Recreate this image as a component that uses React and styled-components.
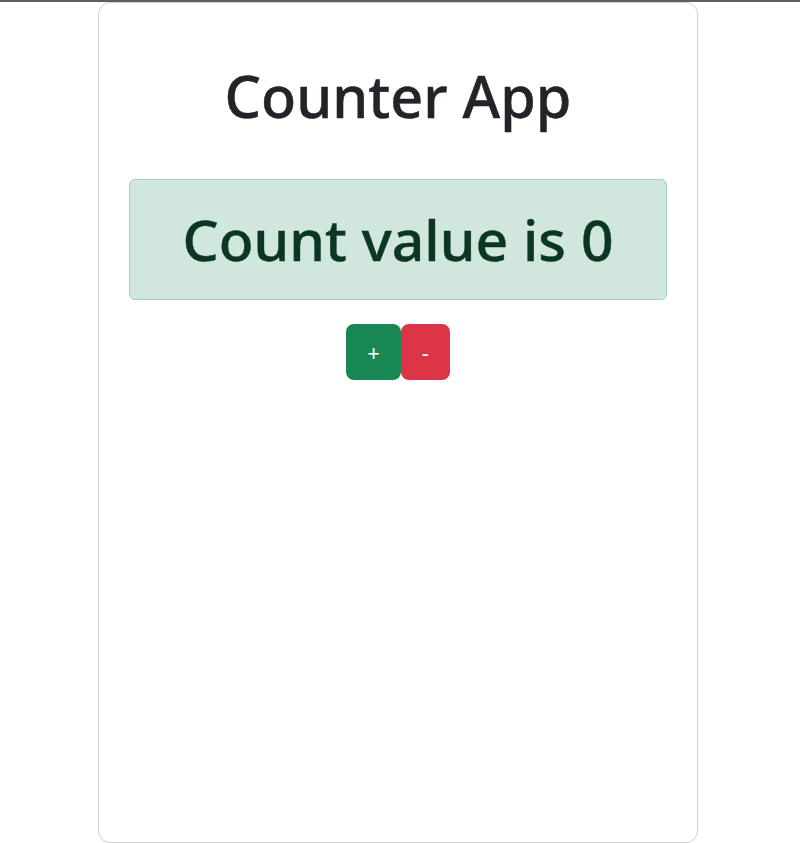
import styled, { createGlobalStyle } from 'styled-components'
import { useState } from 'react'

const GlobalStyle = createGlobalStyle`
  body {
    margin: 0;
    background: #fff;
    font-family: "Noto Sans", "Open Sans", sans-serif;
    color: #212529;
  }
`

export default function App() {
  const [count, setCount] = useState(0)
  return (
    <>
      <GlobalStyle />
      <TopLine />
      <Page>
        <Card>
          <Title>Counter App</Title>
          <Alert>
            <CountText>Count value is {count}</CountText>
          </Alert>
          <ButtonRow>
            <Button $variant="success" onClick={() => setCount(count + 1)}>+</Button>
            <Button $variant="danger" onClick={() => setCount(count - 1)}>-</Button>
          </ButtonRow>
        </Card>
      </Page>
    </>
  )
}

const TopLine = styled.div`
  height: 2px;
  background: #5e5e5e;
`

const Page = styled.div`
  display: flex;
  justify-content: center;
  padding-right: 4px;
`

const Card = styled.div`
  box-sizing: border-box;
  width: 600px;
  height: 841px;
  border: 1px solid #d0d0d0;
  border-radius: 12px;
  padding: 0 30px;
  display: flex;
  flex-direction: column;
  align-items: stretch;
`

const Title = styled.h1`
  margin: 59px 0 48px;
  text-align: center;
  font-size: 57.5px;
  font-weight: 500;
  line-height: 1.2;
  color: #212529;
  -webkit-text-stroke: 0.4px #212529;
`

const Alert = styled.div`
  box-sizing: border-box;
  height: 121px;
  background: #d1e7dd;
  border: 1px solid #a3cfbb;
  border-radius: 6px;
  display: flex;
  align-items: center;
  justify-content: center;
`

const CountText = styled.h1`
  margin: 0;
  font-size: 57px;
  font-weight: 500;
  line-height: 1.2;
  color: #0a3622;
  -webkit-text-stroke: 0.4px #0a3622;
`

const ButtonRow = styled.div`
  display: flex;
  justify-content: center;
  margin-top: 24px;
`

const Button = styled.button`
  box-sizing: border-box;
  height: 56px;
  min-width: 48px;
  padding: 0 21px;
  border: none;
  border-radius: 8px;
  font-family: inherit;
  font-size: 22px;
  color: #fff;
  cursor: pointer;
  background: ${p => (p.$variant === 'success' ? '#198754' : '#dc3545')};
`
